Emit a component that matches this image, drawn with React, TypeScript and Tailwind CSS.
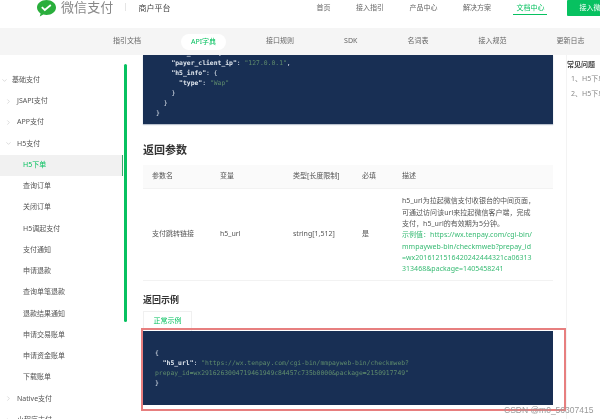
import React from 'react';
import { ChevronDown, ChevronRight } from 'lucide-react';

const navItems = ['首页', '接入指引', '产品中心', '解决方案'];
const tabs = ['指引文档', 'API字典', '接口规则', 'SDK', '名词表', '接入规范', '更新日志'];
const subItems = ['查询订单', '关闭订单', 'H5调起支付', '支付通知', '申请退款', '查询单笔退款', '退款结果通知', '申请交易账单', '申请资金账单', '下载账单'];

const Group: React.FC<{ label: string; open?: boolean }> = ({ label, open }) => (
  <div className="flex h-[21.25px] items-center pl-[17px] relative">
    {open ? (
      <ChevronDown className="absolute left-[5px] w-[7px] h-[7px] text-[#c4c4c4]" />
    ) : (
      <ChevronRight className="absolute left-[5px] w-[7px] h-[7px] text-[#c4c4c4]" />
    )}
    {label}
  </div>
);

const Logo = () => (
  <svg width="19" height="17" viewBox="0 0 19 17" className="shrink-0">
    <path d="M9.5 0C4.3 0 0 3.3 0 7.5c0 2.4 1.4 4.5 3.6 5.900L2.800 16.500l3.500-2c1 .3 2.100.5 3.200.5 5.200 0 9.500-3.300 9.500-7.500S14.700 0 9.500 0z" fill="#2aae3c" />
    <path d="M4.800 7.200l3 2.800 6-5" fill="none" stroke="#fff" strokeWidth="1.800" />
  </svg>
);

const Key: React.FC<{ children: React.ReactNode }> = ({ children }) => <span className="text-[#dfe6ee] font-bold">{children}</span>;
const Str: React.FC<{ children: React.ReactNode }> = ({ children }) => <span className="text-[#5f8c6c]">{children}</span>;

export default function App() {
  return (
    <div className="relative w-[600px] h-[419px] overflow-hidden bg-white text-[7px] text-[#555] font-['Noto_Sans','Noto_Sans_CJK_SC',sans-serif] blur-[0.35px]">
      {/* top header */}
      <header className="flex h-7 pl-[37px] whitespace-nowrap">
        <div className="flex items-start">
          <Logo />
          <span className="ml-[5px] -mt-[2px] text-[13px] leading-[18px] tracking-[0.1px] text-[#888]">微信支付</span>
          <span className="ml-3 mt-[3px] w-px h-[8px] bg-[#e5e5e5]" />
          <span className="ml-3 mt-[2px] text-[8px] leading-[11px] text-[#444]">商户平台</span>
        </div>
        <nav className="flex ml-[146px] gap-[25.500px] pt-px leading-[13px] text-[#666]">
          {navItems.map(item => (
            <span key={item}>{item}</span>
          ))}
          <span className="relative -mx-[3px] px-[3px] h-[14px] border-b border-[#07c160] text-[#07c160]">文档中心</span>
        </nav>
        <div className="ml-[23px] w-[40px] h-4 rounded-[1px] bg-[#07c160] pl-[12px] leading-[15px] text-white">接入微信支付</div>
      </header>

      {/* doc tabs */}
      <div className="relative z-10 flex h-[27px] items-center gap-[50px] pl-[113px] bg-[#f5f5f5] text-[#666] whitespace-nowrap">
        {tabs.map(tab =>
          tab === 'API字典' ? (
            <span key={tab} className="-mx-[10px] px-[10px] h-4 leading-4 rounded-full bg-white text-[#07c160]">{tab}</span>
          ) : (
            <span key={tab}>{tab}</span>
          )
        )}
      </div>

      <div className="flex h-[364px]">
        {/* left menu */}
        <aside className="relative w-[143px] shrink-0 pt-[14.500px] whitespace-nowrap overflow-hidden">
          <div className="w-[123px]">
            <div className="flex h-[21.25px] items-center pl-[12px] relative">
              <ChevronDown className="absolute left-[1px] w-[7px] h-[7px] text-[#c4c4c4]" />
              基础支付
            </div>
            <Group label="JSAPI支付" />
            <Group label="APP支付" />
            <Group label="H5支付" open />
            <div className="flex h-[21.25px] items-center pl-[23px] bg-[#f1f1f1] border-r-[1.500px] border-[#3aa76d] text-[#07c160]">H5下单</div>
            {subItems.map(item => (
              <div key={item} className="flex h-[21.25px] items-center pl-[23px]">{item}</div>
            ))}
            <Group label="Native支付" />
            <Group label="小程序支付" />
          </div>
          <div className="absolute left-[124px] top-[9px] w-[3px] h-[258px] rounded-full bg-[#07c160]" />
        </aside>

        {/* main content */}
        <main className="w-[410px] shrink-0">
          <div className="h-[69px] overflow-hidden bg-[#182f54] shadow-[0_1px_1px_#b9c1cd]">
            <pre className="-mt-[7px] pl-[13px] font-['DejaVu_Sans_Mono',monospace] text-[6.400px] leading-[10px] text-[#dfe6ee]">
              <Key>{'  "scene_info"'}</Key>{': {\n'}
              <Key>{'    "payer_client_ip"'}</Key>{': '}<Str>"127.0.0.1"</Str>{',\n'}
              <Key>{'    "h5_info"'}</Key>{': {\n'}
              <Key>{'      "type"'}</Key>{': '}<Str>"Wap"</Str>{'\n    }\n  }\n}'}
            </pre>
          </div>

          <h2 className="mt-[18px] text-[11px] leading-4 font-bold text-[#333]">返回参数</h2>

          <div className="mt-[7px] grid grid-cols-[68px_73px_69px_40px_160px] border-b border-[#f2f2f2]">
            <div className="contents">
              {['参数名', '变量', '类型[长度限制]', '必填', '描述'].map(h => (
                <div key={h} className="flex h-6 items-center pl-[9px] bg-[#fafafa] border-b border-[#f2f2f2]">{h}</div>
              ))}
            </div>
            <div className="flex h-[91px] items-center pl-[9px] whitespace-nowrap">支付跳转链接</div>
            <div className="flex items-center pl-[9px]">h5_url</div>
            <div className="flex items-center pl-[9px]">string[1,512]</div>
            <div className="flex items-center pl-[9px]">是</div>
            <div className="flex flex-col justify-center pl-[9px] pt-px leading-[11.300px] tracking-[0.03px] whitespace-nowrap">
              <div>h5_url为拉起微信支付收银台的中间页面，</div>
              <div>可通过访问该url来拉起微信客户端，完成</div>
              <div>支付，h5_url的有效期为5分钟。</div>
              <div className="text-[#38bb74]">示例值：https://wx.tenpay.com/cgi-bin/</div>
              <div className="text-[#38bb74]">mmpayweb-bin/checkmweb?prepay_id</div>
              <div className="text-[#38bb74]">=wx2016121516420242444321ca06313</div>
              <div className="text-[#38bb74]">313468&amp;package=1405458241</div>
            </div>
          </div>

          <h3 className="mt-[12px] text-[9px] leading-[13px] font-bold text-[#333]">返回示例</h3>

          <div className="mt-[5px] flex h-5 w-[49px] items-center justify-center border border-b-0 border-[#f0f0f0] text-[#07c160]">正常示例</div>

          <div className="h-[74px] bg-[#182f54] pt-[17px] pl-3">
            <pre className="font-['DejaVu_Sans_Mono',monospace] text-[6.400px] leading-[10px] text-[#dfe6ee]">
              {'{\n'}
              <Key>{'  "h5_url"'}</Key>{': '}<Str>{'"https://wx.tenpay.com/cgi-bin/mmpayweb-bin/checkmweb?\nprepay_id=wx2916263004719461949c84457c735b0000&package=2150917749"'}</Str>{'\n}'}
            </pre>
          </div>
        </main>

        {/* right column */}
        <aside className="ml-[13px] flex-1 border-l border-[#f3f3f3] whitespace-nowrap overflow-hidden">
          <div className="mt-[5px] leading-[10px] font-bold text-[#444]">常见问题</div>
          <div className="mt-[1px] pl-[4px] leading-[15px] text-[#888]">
            <div>1、H5下单</div>
            <div>2、H5下单</div>
          </div>
        </aside>
      </div>

      {/* red annotation box over the response example */}
      <div className="absolute left-[141px] top-[328px] w-[425px] h-[83px] border-2 border-[#e77f7f]" />

      {/* CSDN watermark */}
      <div className="absolute left-[504px] top-[404px] text-[8.500px] leading-3 text-[#9a9a9a] font-['Liberation_Sans',sans-serif] whitespace-nowrap">CSDN @m0_56307415</div>
    </div>
  );
}
